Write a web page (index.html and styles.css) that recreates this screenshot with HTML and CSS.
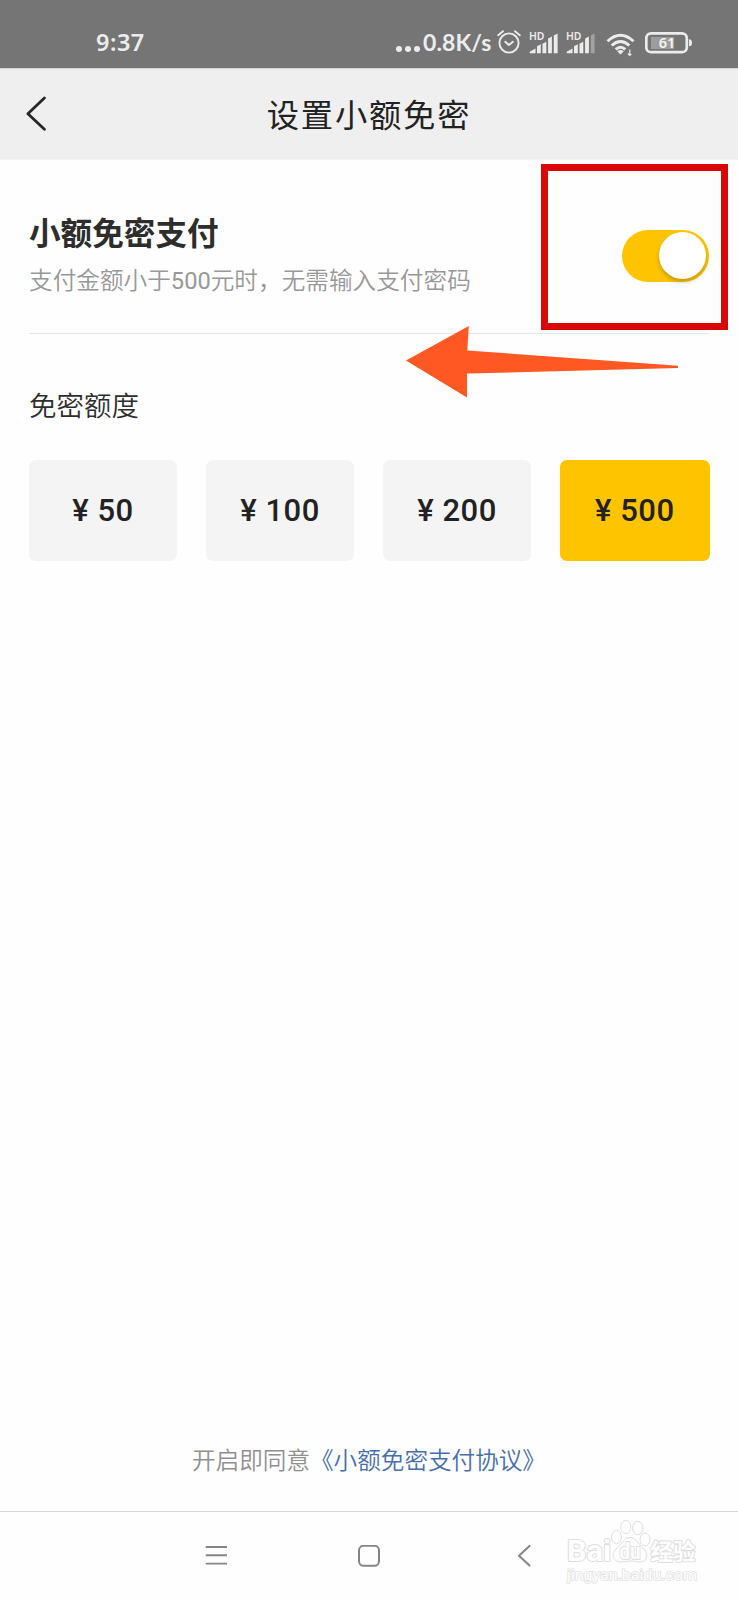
FILE: index.html
```html
<!DOCTYPE html>
<html lang="zh-CN">
<head>
<meta charset="utf-8">
<title>设置小额免密</title>
<link rel="stylesheet" href="styles.css">
</head>
<body>
<div class="screen">
  <div class="status">
    <span class="time">9:37</span>
    <div class="indicators">
      <span class="dots"><i></i><i></i><i></i></span>
      <span class="speed">0.8K/s</span>
      <svg class="alarm" width="24" height="26" viewBox="0 0 24 26" fill="none" stroke="#ececec" stroke-width="1.9" stroke-linecap="round" stroke-linejoin="round"><circle cx="12" cy="14" r="9.6"/><path d="M1.2 6.2 6 2.2M22.8 6.2 18 2.2M8.2 12.8l3.7 3.2 4-3.2"/></svg>
      <svg class="signal" width="30" height="28" viewBox="0 -4 30 28"><text class="hd" x="0" y="9" textLength="15.5" lengthAdjust="spacingAndGlyphs">HD</text><g fill="#ececec"><path d="M.7 22.3v-1.5l5.8-3.2v4.7zM8 22.3v-7l3.8-2v9zM13.5 22.3v-9.5l3.8-2v11.5zM19.1 22.3V7.5l3.8-2v16.8zM24.8 22.3V4.5l3.8-2v19.8z"/></g></svg>
      <svg class="signal second" width="30" height="28" viewBox="0 -4 30 28"><text class="hd" x="0" y="9" textLength="15.5" lengthAdjust="spacingAndGlyphs">HD</text><path fill="#ececec" d="M.7 22.3v-1.5l5.8-3.2v4.7zM8 22.3v-7l3.8-2v9zM13.5 22.3v-9.5l3.8-2v11.5zM19.1 22.3V7.5l3.8-2v16.8z"/><path fill="#a2a2a2" d="M24.8 22.3V4.5l3.8-2v19.8z"/></svg>
      <svg class="wifi" width="30" height="24" viewBox="0 0 30 24" fill="none" stroke="#ececec" stroke-width="2.9"><path d="M1.5 8.2q13-12 26 0M5.7 12.5q8.8-8 17.6 0M9.7 16.4q4.8-4.2 9.6 0"/><path d="m11.2 18.3 3.3 3.2 3.3-3.2q-3.3-2.4-6.6 0Z" fill="#ececec" stroke="none"/><path d="M23.8 16.5v6m-2-2 2 2 1.5-1.5" stroke-width="1.2"/></svg>
      <svg class="battery" width="48" height="22" viewBox="0 0 48 22"><rect x="6" y="5" width="23" height="12" fill="#9d9d9d"/><rect x="1.3" y="1.4" width="40.5" height="18.8" rx="4.8" fill="none" stroke="#ececec" stroke-width="2.7"/><path d="M44 7.2q3 0 3 3.5t-3 3.5z" fill="#ececec"/><text class="charge" x="22" y="16" text-anchor="middle">61</text></svg>
    </div>
  </div>
  <header class="header">
    <svg class="back" width="22" height="38" viewBox="0 0 22 38" fill="none" stroke="#262626" stroke-width="2.8" stroke-linecap="round" stroke-linejoin="round"><path d="M18.4 3 1.9 18.7 18.4 34.3"/></svg>
    <h1 class="title">设置小额免密</h1>
  </header>
  <main class="main">
    <section class="setting">
      <div>
        <h2 class="name">小额免密支付</h2>
        <p class="desc">支付金额小于<span class="limit">500</span>元时，无需输入支付密码</p>
      </div>
      <div class="switch"><span class="knob"></span></div>
    </section>
    <h3 class="label">免密额度</h3>
    <div class="amounts">
      <div class="amount">¥ 50</div>
      <div class="amount">¥ 100</div>
      <div class="amount">¥ 200</div>
      <div class="amount selected">¥ 500</div>
    </div>
    <p class="agreement">开启即同意<a class="link">《小额免密支付协议》</a></p>
  </main>
  <nav class="nav">
    <svg width="22" height="22" viewBox="0 0 22 22" stroke="#858585" stroke-width="1.9" stroke-linecap="round"><path d="M1.5 2h20M1.5 10.3h20M1.5 18.6h20"/></svg>
    <svg width="22" height="22" viewBox="0 0 22 22" fill="none" stroke="#858585" stroke-width="2"><rect x="1" y="0.8" width="20" height="20" rx="4.5"/></svg>
    <svg width="22" height="22" viewBox="0 0 22 22" fill="none" stroke="#858585" stroke-width="2" stroke-linecap="round" stroke-linejoin="round"><path d="M18.5 1 8 10.8l10.5 9.7"/></svg>
  </nav>
  <div class="highlight"></div>
  <svg class="arrow" width="276" height="76" viewBox="0 0 276 76"><path fill="#ff5822" d="M0 35.5 62.8 1 61.3 25.5 272 40.8V43L61 48.5V72.4Z"/></svg>
  <svg class="watermark" width="140" height="68" viewBox="0 0 140 68" fill="#fefefe" stroke="#dedede" stroke-width="1">
    <text class="brand" x="1" y="41" textLength="44" lengthAdjust="spacingAndGlyphs">Bai</text>
    <g><ellipse cx="50.5" cy="17" rx="5" ry="6.7"/><ellipse cx="59.8" cy="7" rx="5" ry="6.6"/><ellipse cx="71.8" cy="8" rx="5.2" ry="6.6"/><ellipse cx="79" cy="19.5" rx="5" ry="6.4"/><path d="M64 17.5C58 17.5 56 24 51 28C44 34 47 42 55 42C59 42 61 41 65 41C69 41 70 42 74 42C82 42 83 33 77 28C72 24 70 17.5 64 17.5Z"/></g>
    <text class="du" x="53.5" y="39" textLength="21" lengthAdjust="spacingAndGlyphs">du</text>
    <text class="cn" x="84.5" y="40" textLength="45" lengthAdjust="spacingAndGlyphs">经验</text>
    <text class="site" x="1" y="59.5" textLength="130" lengthAdjust="spacingAndGlyphs">jingyan.baidu.com</text>
  </svg>
</div>
</body>
</html>
```

FILE: styles.css
```css
* { box-sizing: border-box; }
body { margin: 0; background: #fefefe; font-family: Roboto, "Noto Sans CJK SC", sans-serif; }
h1, h2, h3, p { margin: 0; font-weight: 400; }
svg { display: block; flex: none; }
.screen { position: relative; display: flex; flex-direction: column; width: 738px; height: 1600px; overflow: hidden; }
.status { display: flex; justify-content: space-between; height: 68px; padding: 0 45px 0 96px; background: #757575; color: #ececec; font-family: Lato, sans-serif; }
.time { font: 600 23.5px/24px "Noto Sans", sans-serif; margin-top: 30px; letter-spacing: .5px; }
.indicators { display: flex; align-items: flex-start; }
.dots { display: flex; gap: 3px; margin: 46px 3px 0 0; }
.dots i { width: 6px; height: 6px; border-radius: 50%; background: #ececec; }
.speed { width: 68px; margin-top: 28px; margin-right: 6px; font-size: 23px; line-height: 28px; font-weight: 700; letter-spacing: .1px; white-space: nowrap; }
.alarm { margin: 29px 8px 0 0; }
.signal { margin-top: 27px; }
.second { margin-left: 7px; }
.hd { font: 600 11px "Noto Sans", sans-serif; fill: #ececec; }
.wifi { margin: 33px 9px 0 10px; }
.battery { margin-top: 32px; }
.charge { font: 600 14.5px "Noto Sans", sans-serif; fill: #f5f5f5; }
.header { display: flex; align-items: center; height: 92px; padding-left: 26px; background: #efefef; border-top: 1px solid #d4d4d4; border-bottom: 1px solid #f3f3f3; color: #222; }
.title { flex: 1; margin-right: 48px; padding-top: 3px; text-align: center; font-size: 32.3px; letter-spacing: 1.8px; line-height: 48px; }
.main { display: flex; flex-direction: column; flex: 1; padding: 0 29px; }
.setting { display: flex; justify-content: space-between; height: 174px; padding-top: 51px; border-bottom: 1px solid #e5e5e5; }
.name { font-size: 31.6px; line-height: 48px; font-weight: 700; color: #2d2d2d; }
.desc { margin-top: 4px; font-size: 23.65px; line-height: 36px; font-weight: 350; color: #989898; white-space: nowrap; }
.limit { font-weight: 400; }
.switch { width: 87px; height: 52px; margin-top: 19px; padding: 2px 3px; border-radius: 26px; background: #ffc400; }
.knob { display: block; width: 47px; height: 47px; margin-left: auto; border-radius: 50%; background: #fff; box-shadow: 0 3px 4px rgba(80,60,0,.3); }
.label { margin: 53px 0 33px; font-size: 27.5px; line-height: 40px; font-weight: 350; color: #2e2e2e; }
.amounts { display: grid; grid-template-columns: 148px 148px 148px 149.5px; column-gap: 29px; height: 101px; }
.amount { display: flex; align-items: center; justify-content: center; border-radius: 7px; background: #f4f4f4; color: #222; font-size: 31px; line-height: 36px; font-weight: 500; letter-spacing: .5px; }
.selected { background: #ffc400; }
.agreement { margin: auto 0 33px; text-align: center; font-size: 23.6px; line-height: 34px; font-weight: 350; color: #909090; }
.link { color: #476fa9; }
.nav { display: flex; height: 89px; padding: 33px 0 0 205px; gap: 131px; border-top: 1px solid #d7d7d7; }
.highlight { position: absolute; left: 541px; top: 164px; width: 187px; height: 166px; border: 7px solid #da0707; }
.arrow { position: absolute; left: 406px; top: 325px; }
.watermark { position: absolute; left: 566px; top: 1520px; }
.watermark text { paint-order: stroke; stroke-width: 2px; stroke-linejoin: round; }
.brand { font: 700 29px Roboto, sans-serif; }
.du { font: 700 22px Roboto, sans-serif; }
.cn { font: 700 23px "Noto Sans CJK SC", sans-serif; }
.watermark .site { font: 400 15px Roboto, sans-serif; stroke-width: 1.6px; stroke: #e2e2e2; }
```
